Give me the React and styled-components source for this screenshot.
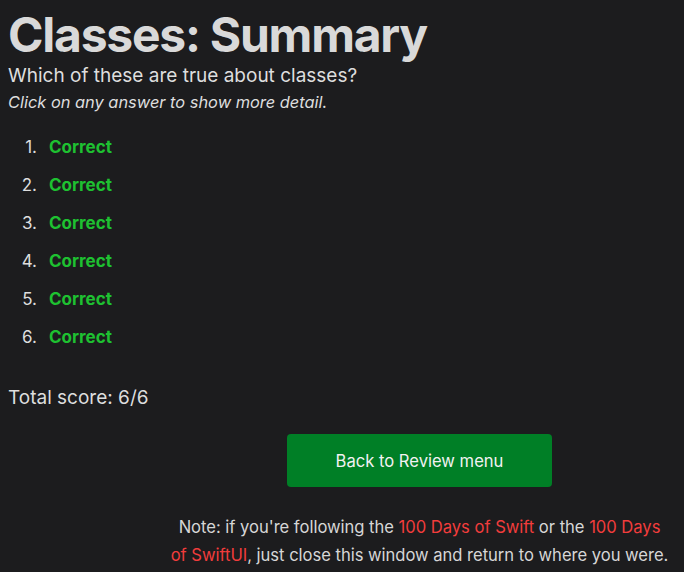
import React from "react";
import styled, { createGlobalStyle } from "styled-components";

const Global = createGlobalStyle`
  html, body { background: #1c1c1e; }
  body {
    margin: 0;
    padding: 0 8px;
    font-family: Inter, "Noto Sans", sans-serif;
    color: #dedede;
    overflow: hidden;
  }
`;

const Page = styled.main`
  display: flex;
  flex-direction: column;
`;

const Title = styled.h1`
  margin: 7px 0 0;
  font-size: 48px;
  font-weight: 700;
  line-height: 56px;
  color: #d9d9d9;
  letter-spacing: -1.25px;
`;

const Question = styled.p`
  margin: 0;
  font-size: 19px;
  line-height: 26px;
`;

const Hint = styled.p`
  margin: 0;
  font-size: 16.4px;
  font-style: italic;
  line-height: 26px;
`;

const Answers = styled.ol`
  margin: 21px 0 0;
  padding: 0;
  list-style: none;
  counter-reset: answer;
  display: flex;
  flex-direction: column;
  gap: 16px;
`;

const Answer = styled.li`
  counter-increment: answer;
  display: flex;
  align-items: baseline;
  font-size: 17px;
  line-height: 22px;
  &::before {
    content: counter(answer) ".";
    width: 29px;
    margin-right: 12px;
    text-align: right;
    color: #dedede;
    font-size: 17px;
  }
`;

const Verdict = styled.span`
  color: ${(p) => (p.$ok ? "#1ec131" : "#ff453a")};
  font-weight: 700;
`;

const Score = styled.p`
  margin: 37px 0 0;
  font-size: 19px;
  line-height: 26px;
`;

const Footer = styled.div`
  margin: 23px 0 0 161px;
  width: 501px;
  display: flex;
  flex-direction: column;
  align-items: center;
  gap: 26px;
`;

const Button = styled.button`
  width: 265px;
  height: 53px;
  border: none;
  border-radius: 4px;
  background: #007f26;
  color: #f2f2f2;
  font-family: Inter, "Noto Sans", sans-serif;
  font-size: 16.6px;
  cursor: pointer;
`;

const Note = styled.p`
  margin: 0;
  text-align: center;
  font-size: 16.6px;
  line-height: 28px;
  letter-spacing: -0.03px;
  color: #d6d6d6;
`;

const Link = styled.a`
  color: #f23c3c;
  text-decoration: none;
`;

export default function App() {
  const results = [true, true, true, true, true, true];
  return (
    <>
      <Global />
      <Page>
        <Title>Classes: Summary</Title>
        <Question>Which of these are true about classes?</Question>
        <Hint>Click on any answer to show more detail.</Hint>
        <Answers>
          {results.map((ok, i) => (
            <Answer key={i}>
              <Verdict $ok={ok}>{ok ? "Correct" : "Wrong"}</Verdict>
            </Answer>
          ))}
        </Answers>
        <Score>Total score: 6/6</Score>
        <Footer>
          <Button>Back to Review menu</Button>
          <Note>
            Note: if you're following the <Link href="#">100 Days of Swift</Link> or the{" "}
            <Link href="#">100 Days of SwiftUI</Link>, just close this window and return to where you were.
          </Note>
        </Footer>
      </Page>
    </>
  );
}
